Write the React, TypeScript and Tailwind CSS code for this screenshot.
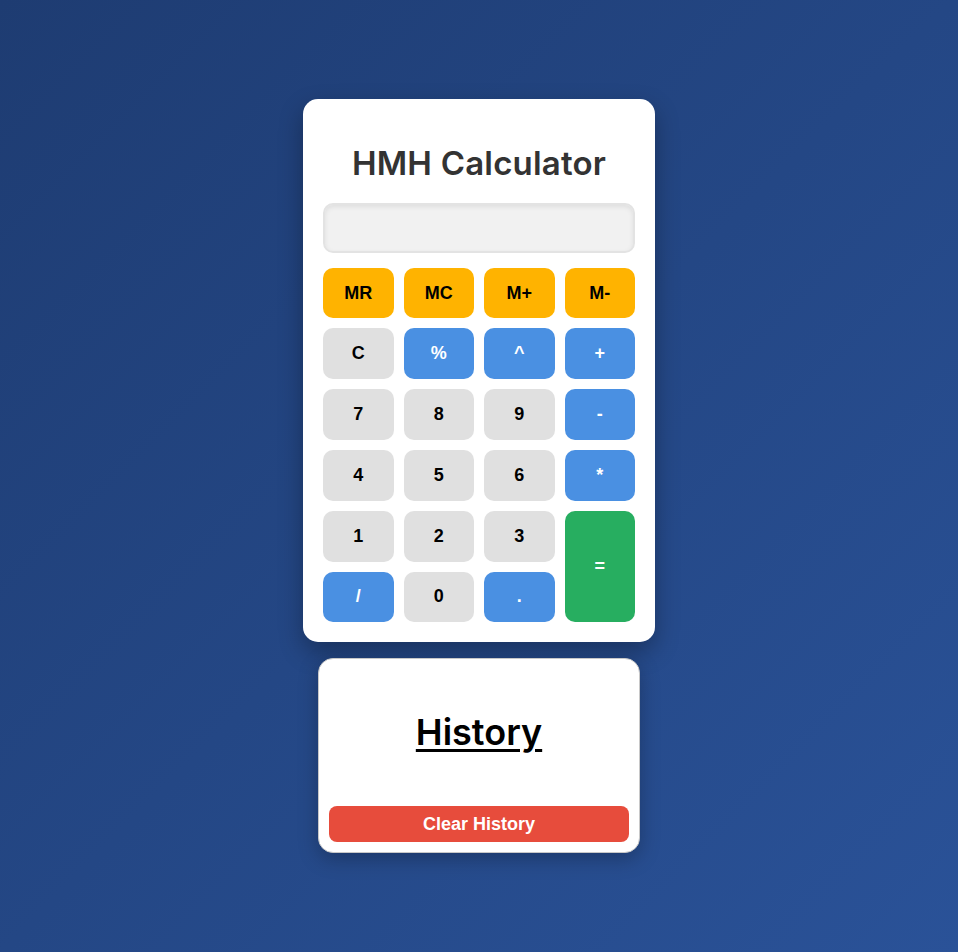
const rows: { label: string; kind: "mem" | "num" | "op" | "eq" }[] = [
  { label: "MR", kind: "mem" },
  { label: "MC", kind: "mem" },
  { label: "M+", kind: "mem" },
  { label: "M-", kind: "mem" },
  { label: "C", kind: "num" },
  { label: "%", kind: "op" },
  { label: "^", kind: "op" },
  { label: "+", kind: "op" },
  { label: "7", kind: "num" },
  { label: "8", kind: "num" },
  { label: "9", kind: "num" },
  { label: "-", kind: "op" },
  { label: "4", kind: "num" },
  { label: "5", kind: "num" },
  { label: "6", kind: "num" },
  { label: "*", kind: "op" },
  { label: "1", kind: "num" },
  { label: "2", kind: "num" },
  { label: "3", kind: "num" },
  { label: "=", kind: "eq" },
  { label: "/", kind: "op" },
  { label: "0", kind: "num" },
  { label: ".", kind: "op" },
];

const styles = {
  mem: "bg-[#ffb300] text-black",
  num: "bg-[#e0e0e0] text-black",
  op: "bg-[#4a90e2] text-white",
  eq: "bg-[#27ae60] text-white row-span-2",
};

export default function App() {
  return (
    <div className="flex min-h-screen flex-col items-center justify-center gap-4 bg-[linear-gradient(135deg,#1e3c72,#2a5298)]">
      {/* CALCULATOR */}
      <div className="w-[352px] rounded-[15px] bg-white p-5 shadow-[0_10px_25px_rgba(0,0,0,0.3)]">
        <h1 className="mt-5 mb-4 text-center font-['Inter',sans-serif] text-[33px] leading-[48px] font-semibold tracking-[0.2px] text-[#333]">
          HMH Calculator
        </h1>

        <div className="mb-[15px] h-[50px] rounded-[10px] border-2 border-[#e3e3e3] bg-[#f1f1f1] shadow-[inset_0_2px_5px_rgba(0,0,0,0.08)]" />

        <div className="grid grid-cols-4 auto-rows-[50.8px] gap-[10px]">
          {rows.map((b) => (
            <button
              key={b.label}
              className={`flex items-center justify-center rounded-[10px] font-['Liberation_Sans',Arial,sans-serif] text-[18px] font-bold ${styles[b.kind]}`}
            >
              {b.label}
            </button>
          ))}
        </div>
      </div>

      {/* HISTORY */}
      <div className="flex h-[195px] w-[322px] flex-col rounded-[15px] border border-[#c8c8c8] bg-white p-[10px] shadow-[0_6px_20px_rgba(0,0,0,0.25)]">
        <div className="flex flex-1 items-center justify-center pb-3">
          <h2 className="font-['Inter',sans-serif] text-[36px] font-semibold text-black underline decoration-[3px] underline-offset-[4px]">
            History
          </h2>
        </div>
        <button className="h-[36px] w-full rounded-[8px] bg-[#e74c3c] font-['Liberation_Sans',Arial,sans-serif] text-[18px] font-bold text-white">
          Clear History
        </button>
      </div>
    </div>
  );
}
